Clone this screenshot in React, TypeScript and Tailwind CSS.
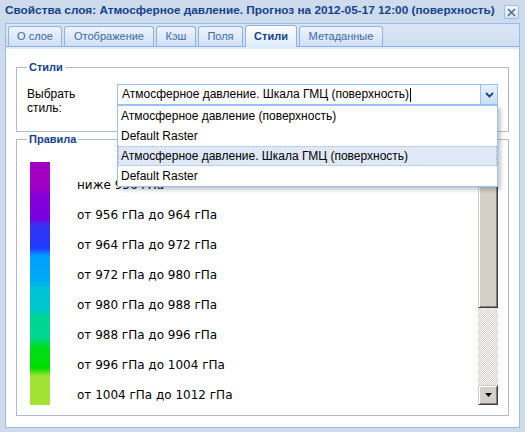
import React from "react";

const rules = [
  "ниже 956 гПа",
  "от 956 гПа до 964 гПа",
  "от 964 гПа до 972 гПа",
  "от 972 гПа до 980 гПа",
  "от 980 гПа до 988 гПа",
  "от 988 гПа до 996 гПа",
  "от 996 гПа до 1004 гПа",
  "от 1004 гПа до 1012 гПа",
];

const tabs = [
  { label: "О слое", w: "w-[54px]" },
  { label: "Отображение", w: "w-[90px]" },
  { label: "Кэш", w: "w-[40px]" },
  { label: "Поля", w: "w-[45px]" },
  { label: "Стили", w: "w-[52px]", active: true },
  { label: "Метаданные", w: "w-[84px]" },
];

const options = [
  "Атмосферное давление (поверхность)",
  "Default Raster",
  "Атмосферное давление. Шкала ГМЦ (поверхность)",
  "Default Raster",
];

function ClassicButton({ children, className = "" }: { children?: React.ReactNode; className?: string }) {
  return (
    <div
      className={`bg-[#d4d0c8] border border-t-[#d4d0c8] border-l-[#d4d0c8] border-r-[#404040] border-b-[#404040] shadow-[inset_1px_1px_0_#ffffff,inset_-1px_-1px_0_#808080] flex items-center justify-center shrink-0 ${className}`}
    >
      {children}
    </div>
  );
}

export default function App() {
  return (
    <div className="w-[525px] h-[432px] bg-[#cddbed] flex flex-col overflow-hidden font-['Liberation_Sans',Arial,sans-serif]">
      {/* Title bar */}
      <div className="h-[23px] flex items-start justify-between pl-[5px] pr-[6px] pt-[3px]">
        <span className="text-[11.8px] font-bold leading-[15px] text-[#15428b] whitespace-nowrap">
          Свойства слоя: Атмосферное давление. Прогноз на 2012-05-17 12:00 (поверхность)
        </span>
        <div className="mt-[2px] w-[15px] h-[14px] rounded-[2px] border border-[#99bbe8] bg-[linear-gradient(to_bottom,#f3f8ff,#d7e5f7)] flex items-center justify-center">
          <svg width="9" height="9" viewBox="0 0 9 9">
            <path d="M1 1 L8 8 M8 1 L1 8" stroke="#4e6fa0" strokeWidth="1.6" />
          </svg>
        </div>
      </div>

      {/* Window body */}
      <div className="flex-1 mx-[5px] mb-[4px] border border-[#99bbe8] bg-white flex flex-col">
        {/* Tab strip */}
        <div className="h-[23px] flex items-end gap-[2px] pl-[2px] border-b border-[#8db2e3] bg-[linear-gradient(to_bottom,#dae6f4,#d0def0)]">
          {tabs.map((t) =>
            t.active ? (
              <div
                key={t.label}
                className={`${t.w} h-[22px] -mb-px relative z-[1] rounded-t-[3px] border border-b-0 border-[#8db2e3] bg-[linear-gradient(to_bottom,#ffffff,#deecfd)] flex items-center justify-center text-[11px] font-bold text-[#15428b]`}
              >
                {t.label}
              </div>
            ) : (
              <div
                key={t.label}
                className={`${t.w} h-[20px] rounded-t-[3px] border border-b-0 border-[#8db2e3] bg-[linear-gradient(to_bottom,#eef5fe,#cfe0f6)] flex items-center justify-center text-[11px] text-[#416aa3]`}
              >
                {t.label}
              </div>
            )
          )}
        </div>
        <div className="h-[2px] bg-[#deecfd]" />

        {/* Content */}
        <div className="flex-1 px-[10px] pt-[11px] flex flex-col">
          {/* Fieldset Стили */}
          <fieldset className="border border-[#b5b8c8] px-[10px] pt-[10px] pb-[16px] relative z-[2]">
            <legend className="px-[2px] text-[11px] font-bold leading-[14px] text-[#15428b]">Стили</legend>
            <div className="flex items-start">
              <div className="w-[90px] pt-[3px] text-[12px] leading-[14px] text-black">
                Выбрать
                <br />
                стиль:
              </div>
              <div className="relative w-[381px] h-[21px] flex border border-[#98c0f4] bg-white">
                <div className="flex-1 pl-[4px] text-[12px] leading-[19px] text-black whitespace-nowrap flex items-center">
                  <span>Атмосферное давление. Шкала ГМЦ (поверхность)</span>
                  <span className="inline-block w-px h-[14px] bg-black ml-px" />
                </div>
                <div className="w-[17px] border-l border-[#98c0f4] bg-[linear-gradient(to_bottom,#eaf2fd,#c9dcf5)] flex items-center justify-center">
                  <svg width="9" height="6" viewBox="0 0 9 6">
                    <path d="M1 1 L4.5 4.5 L8 1" stroke="#15428b" strokeWidth="1.8" fill="none" />
                  </svg>
                </div>
                {/* Dropdown list */}
                <div className="absolute left-[-1px] top-[20px] w-[381px] border border-[#98c0f4] bg-white shadow-[3px_3px_4px_rgba(0,0,0,0.22)] z-10">
                  {options.map((o, i) =>
                    i === 2 ? (
                      <div
                        key={i}
                        className="h-[20px] pl-[2px] border border-dotted border-[#a3bae9] bg-[#dfe8f6] text-[12px] leading-[18px] text-black whitespace-nowrap"
                      >
                        {o}
                      </div>
                    ) : (
                      <div key={i} className="h-[20px] pl-[3px] text-[12px] leading-[20px] text-black whitespace-nowrap">
                        {o}
                      </div>
                    )
                  )}
                </div>
              </div>
            </div>
          </fieldset>

          {/* Fieldset Правила */}
          <fieldset className="border border-[#b5b8c8] px-[10px] pt-0 pb-[10px]">
            <legend className="px-[2px] text-[11px] font-bold leading-[14px] text-[#15428b]">Правила</legend>
            <div className="h-[259px] flex">
              <div className="flex-1 overflow-hidden flex items-start font-['DejaVu_Sans',sans-serif]">
                <div className="ml-[3px] mt-[16px] w-[20px] h-[243px] shrink-0 bg-[linear-gradient(to_bottom,#a200c2_0px,#a200c2_26px,#8400d8_34px,#7a00de_56px,#3434f2_64px,#2038ff_86px,#00a0ff_94px,#00a8f6_118px,#00c2d8_126px,#00c8cc_148px,#00d690_156px,#00d890_176px,#00dc18_186px,#00dd00_206px,#a2e234_214px,#a2e234_243px)]" />
                <div className="ml-[27px] mt-[24px] flex flex-col shrink-0">
                  {rules.map((r) => (
                    <div key={r} className="h-[30px] shrink-0 flex items-center text-[12px] text-black whitespace-nowrap">
                      {r}
                    </div>
                  ))}
                </div>
              </div>
              {/* Scrollbar */}
              <div className="w-[20px] flex flex-col">
                <ClassicButton className="h-[20px]">
                  <svg width="7" height="4" viewBox="0 0 7 4">
                    <path d="M0 4 L3.5 0 L7 4 Z" fill="#000" />
                  </svg>
                </ClassicButton>
                <ClassicButton className="h-[142px]" />
                <div className="h-[77px] shrink-0 bg-[image:repeating-conic-gradient(#d4d0c8_0_25%,#ffffff_0_50%)] bg-[length:2px_2px]" />
                <ClassicButton className="h-[20px]">
                  <svg width="7" height="4" viewBox="0 0 7 4">
                    <path d="M0 0 L7 0 L3.5 4 Z" fill="#000" />
                  </svg>
                </ClassicButton>
              </div>
            </div>
          </fieldset>
        </div>
      </div>
    </div>
  );
}
